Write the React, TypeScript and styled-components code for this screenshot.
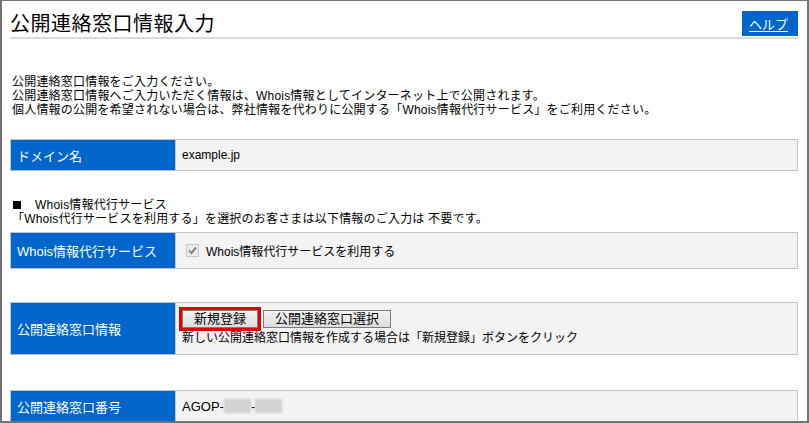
import React from "react";
import styled, { createGlobalStyle } from "styled-components";

const GlobalStyle = createGlobalStyle`
  html, body {
    margin: 0;
    padding: 0;
    background: #ffffff;
  }
  body {
    font-family: "Liberation Sans", "Noto Sans CJK JP", sans-serif;
    color: #000;
  }
`;

const Frame = styled.div`
  width: 809px;
  height: 423px;
  box-sizing: border-box;
  border: 2px solid #737373;
  border-top-width: 1px;
  overflow: hidden;
  padding: 10px 9px 0 8px;
  background: #fff;
`;

const Header = styled.div`
  display: flex;
  align-items: flex-end;
  justify-content: space-between;
  padding-bottom: 1px;
  border-bottom: 2px solid #dadada;
`;

const Title = styled.h1`
  margin: 0;
  font-size: 20px;
  font-weight: normal;
  line-height: 24px;
  letter-spacing: 0.5px;
`;

const HelpButton = styled.a`
  display: flex;
  align-items: center;
  box-sizing: border-box;
  width: 56px;
  height: 25px;
  padding-left: 7px;
  background: #0066cc;
  color: #fff;
  font-size: 13px;
  text-decoration: underline;
  text-underline-offset: 2px;
`;

const Paragraph = styled.p<{ $top: number }>`
  margin: ${(p) => p.$top}px 0 0 2px;
  font-size: 12px;
  line-height: 14px;
  letter-spacing: 0.2px;
`;

const Square = styled.span`
  display: inline-block;
  width: 8px;
  height: 8px;
  margin: 0 14px 0 1px;
  background: #000;
  vertical-align: 0;
`;

const Row = styled.div<{ $top: number; $height: number }>`
  display: flex;
  box-sizing: border-box;
  height: ${(p) => p.$height}px;
  margin-top: ${(p) => p.$top}px;
  border: 1px solid #c3c3c3;
`;

const Label = styled.div`
  display: flex;
  align-items: center;
  box-sizing: border-box;
  width: 165px;
  padding-left: 6px;
  background: #0066cc;
  border-right: 1px solid #c3c3c3;
  color: #fff;
  font-size: 13px;
`;

const Value = styled.div<{ $column?: boolean }>`
  flex: 1;
  display: flex;
  flex-direction: ${(p) => (p.$column ? "column" : "row")};
  align-items: ${(p) => (p.$column ? "flex-start" : "center")};
  padding: ${(p) => (p.$column ? "7px 0 0 6px" : "0 0 0 6px")};
  background: #f3f3f3;
  font-size: 12px;
`;

const Code = styled.span`
  font-size: 13px;
  display: inline-flex;
  align-items: center;
`;

const CheckBox = styled.span`
  display: inline-flex;
  align-items: center;
  justify-content: center;
  box-sizing: border-box;
  width: 13px;
  height: 13px;
  margin: 0 7px 0 4px;
  border: 1px solid #c8c8c8;
  background: #ececec;
`;

const Buttons = styled.div`
  display: flex;
  gap: 5px;
`;

const Button = styled.button<{ $marked?: boolean }>`
  height: 18px;
  padding: 0 11px;
  border: 1px solid #7c7c7c;
  border-radius: 0;
  background: linear-gradient(#f4f4f4, #dcdcdc);
  font-family: "Liberation Sans", "Noto Sans CJK JP", sans-serif;
  font-size: 13px;
  line-height: 16px;
  color: #000;
  outline: ${(p) => (p.$marked ? "3px solid #e00000" : "none")};
`;

const Hint = styled.div`
  margin-top: 4px;
  font-size: 12px;
  line-height: 13px;
`;

const Masked = styled.span`
  display: inline-block;
  width: 27px;
  height: 14px;
  background: #d2d2d2;
  filter: blur(1px);
`;

export default function App() {
  return (
    <>
      <GlobalStyle />
      <Frame>
        <Header>
          <Title>公開連絡窓口情報入力</Title>
          <HelpButton>ヘルプ</HelpButton>
        </Header>

        <Paragraph $top={36}>
          公開連絡窓口情報をご入力ください。
          <br />
          公開連絡窓口情報へご入力いただく情報は、Whois情報としてインターネット上で公開されます。
          <br />
          個人情報の公開を希望されない場合は、弊社情報を代わりに公開する「Whois情報代行サービス」をご利用ください。
        </Paragraph>

        <Row $top={22} $height={32}>
          <Label>ドメイン名</Label>
          <Value>example.jp</Value>
        </Row>

        <Paragraph $top={27}>
          <Square />
          Whois情報代行サービス
          <br />
          「Whois代行サービスを利用する」を選択のお客さまは以下情報のご入力は 不要です。
        </Paragraph>

        <Row $top={6} $height={37}>
          <Label>Whois情報代行サービス</Label>
          <Value>
            <CheckBox>
              <svg width="11" height="11" viewBox="0 0 11 11">
                <path d="M2 5.5 L4.5 8 L9 2.5" fill="none" stroke="#858585" strokeWidth="2" />
              </svg>
            </CheckBox>
            Whois情報代行サービスを利用する
          </Value>
        </Row>

        <Row $top={33} $height={53}>
          <Label>公開連絡窓口情報</Label>
          <Value $column>
            <Buttons>
              <Button $marked>新規登録</Button>
              <Button>公開連絡窓口選択</Button>
            </Buttons>
            <Hint>新しい公開連絡窓口情報を作成する場合は「新規登録」ボタンをクリック</Hint>
          </Value>
        </Row>

        <Row $top={35} $height={32}>
          <Label>公開連絡窓口番号</Label>
          <Value>
            <Code>
              AGOP-<Masked />-<Masked />
            </Code>
          </Value>
        </Row>
      </Frame>
    </>
  );
}
